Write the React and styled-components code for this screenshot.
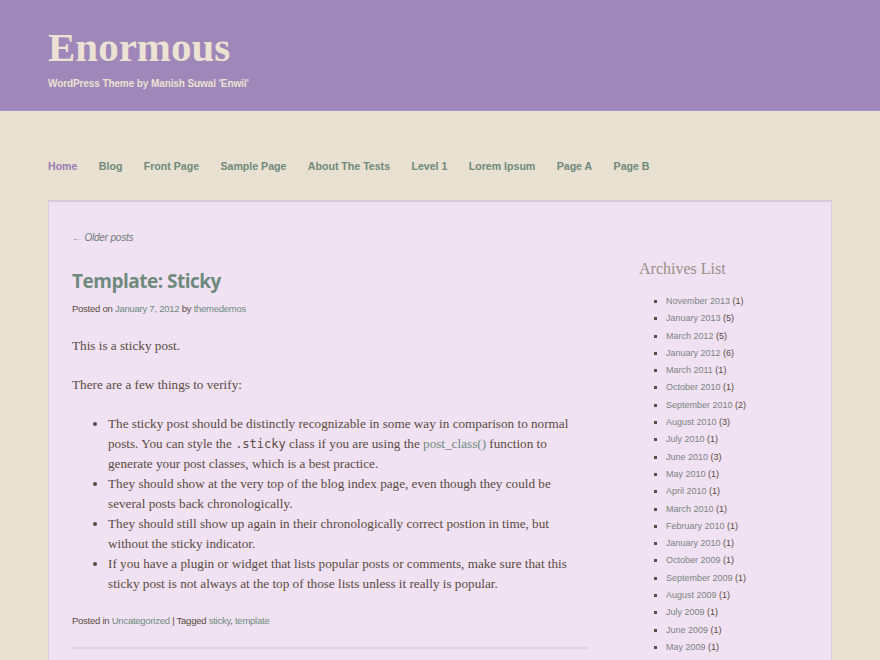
import React from "react";
import styled, { createGlobalStyle } from "styled-components";

const GlobalStyle = createGlobalStyle`
  html, body {
    margin: 0;
    padding: 0;
    background: #e8e0d0;
  }
  * { box-sizing: border-box; }
`;

const menu = ["Home", "Blog", "Front Page", "Sample Page", "About The Tests", "Level 1", "Lorem Ipsum", "Page A", "Page B"];

const archives = [
  ["November 2013", 1], ["January 2013", 5], ["March 2012", 5], ["January 2012", 6],
  ["March 2011", 1], ["October 2010", 1], ["September 2010", 2], ["August 2010", 3],
  ["July 2010", 1], ["June 2010", 3], ["May 2010", 1], ["April 2010", 1],
  ["March 2010", 1], ["February 2010", 1], ["January 2010", 1], ["October 2009", 1],
  ["September 2009", 1], ["August 2009", 1], ["July 2009", 1], ["June 2009", 1],
  ["May 2009", 1],
];

const App = () => {
  return (
    <Page>
      <GlobalStyle />
      <Masthead>
        <SiteTitle>Enormous</SiteTitle>
        <SiteDesc>WordPress Theme by Manish Suwal 'Enwil'</SiteDesc>
      </Masthead>
      <Nav>
        {menu.map((m, i) => (
          <NavItem key={m} current={i === 0}>{m}</NavItem>
        ))}
      </Nav>
      <Content>
        <Main>
          <OlderPosts>← Older posts</OlderPosts>
          <PostTitle>Template: Sticky</PostTitle>
          <Meta>
            Posted on <MetaLink>January 7, 2012</MetaLink> by <MetaLink>themedemos</MetaLink>
          </Meta>
          <Body>
            <p>This is a sticky post.</p>
            <p>There are a few things to verify:</p>
            <ul>
              <li>
                The sticky post should be distinctly recognizable in some way in comparison to normal
                posts. You can style the <Code>.sticky</Code> class if you are using the{" "}
                <BodyLink>post_class()</BodyLink> function to generate your post classes, which is a best practice.
              </li>
              <li>
                They should show at the very top of the blog index page, even though they could be
                several posts back chronologically.
              </li>
              <li>
                They should still show up again in their chronologically correct postion in time, but
                without the sticky indicator.
              </li>
              <li>
                If you have a plugin or widget that lists popular posts or comments, make sure that this
                sticky post is not always at the top of those lists unless it really is popular.
              </li>
            </ul>
          </Body>
          <Meta>
            Posted in <MetaLink>Uncategorized</MetaLink> | Tagged <MetaLink>sticky</MetaLink>, <MetaLink>template</MetaLink>
          </Meta>
          <Separator />
        </Main>
        <Sidebar>
          <WidgetTitle>Archives List</WidgetTitle>
          <ArchiveList>
            {archives.map(([name, n]) => (
              <li key={name}>
                <ArchiveLink>{name}</ArchiveLink> ({n})
              </li>
            ))}
          </ArchiveList>
        </Sidebar>
      </Content>
    </Page>
  );
};

const Page = styled.div`
  width: 880px;
  height: 660px;
  overflow: hidden;
  background: #e8e0d0;
  font-family: "Liberation Sans", Arial, sans-serif;
`;

const Masthead = styled.header`
  height: 111px;
  background: #a087b9;
  border-bottom: 1px solid #ad97c2;
  padding: 26px 48px 0;
`;

const SiteTitle = styled.h1`
  margin: 0;
  font-family: "Liberation Serif", "Times New Roman", serif;
  font-weight: bold;
  font-size: 41px;
  line-height: 42px;
  color: #ebe2d3;
`;

const SiteDesc = styled.p`
  margin: 10px 0 0;
  font-size: 10px;
  font-weight: bold;
  letter-spacing: -0.1px;
  color: #ebe2d3;
`;

const Nav = styled.nav`
  display: flex;
  gap: 21.4px;
  padding: 48px 48px 0;
  height: 89px;
`;

const NavItem = styled.a`
  font-size: 10.6px;
  font-weight: bold;
  line-height: 14px;
  color: ${(p) => (p.current ? "#9a7bb5" : "#6e8a7d")};
`;

const Content = styled.div`
  margin: 0 48px;
  background: #f0e2f3;
  border-top: 2px solid #d8c8df;
  border-left: 1px solid #dcd0dc;
  border-right: 1px solid #dcd0dc;
  display: flex;
  padding: 0 0 0 23px;
  height: 500px;
`;

const Main = styled.div`
  width: 516px;
  padding-top: 29px;
`;

const OlderPosts = styled.div`
  font-size: 10px;
  font-style: italic;
  letter-spacing: -0.2px;
  color: #6e7b74;
  line-height: 14px;
`;

const PostTitle = styled.h2`
  margin: 23px 0 0;
  font-family: "Open Sans", "Noto Sans", sans-serif;
  font-weight: bold;
  font-size: 19px;
  line-height: 26px;
  letter-spacing: -0.5px;
  color: #6e8a7d;
`;

const Meta = styled.div`
  margin-top: 8px;
  font-size: 9.5px;
  letter-spacing: -0.25px;
  line-height: 14px;
  color: #5a4a42;
`;

const MetaLink = styled.a`
  color: #6e8a7d;
`;

const Body = styled.div`
  font-family: "Liberation Serif", Georgia, serif;
  font-size: 13.2px;
  line-height: 20px;
  color: #5a4a42;
  margin-top: 20px;
  margin-bottom: 20px;

  p {
    margin: 0 0 19px;
  }

  ul {
    margin: 2px 0 0;
    padding-left: 36px;
  }
`;

const Code = styled.code`
  font-family: "DejaVu Sans Mono", monospace;
  font-size: 12px;
  line-height: 1;
`;

const BodyLink = styled.a`
  color: #6e8a7d;
`;

const Separator = styled.hr`
  margin: 19px 0 0;
  border: 0;
  border-top: 2px solid #e3d3e6;
`;

const Sidebar = styled.aside`
  padding: 57px 0 0 51px;
`;

const WidgetTitle = styled.h3`
  margin: 0;
  font-family: "Liberation Serif", Georgia, serif;
  font-weight: normal;
  font-size: 16px;
  line-height: 20px;
  color: #989088;
`;

const ArchiveList = styled.ul`
  margin: 14px 0 0;
  padding-left: 27px;
  font-size: 9px;
  line-height: 17.3px;
  color: #5a4a42;
  list-style: square;
`;

const ArchiveLink = styled.a`
  color: #7a8480;
`;

export default App;
